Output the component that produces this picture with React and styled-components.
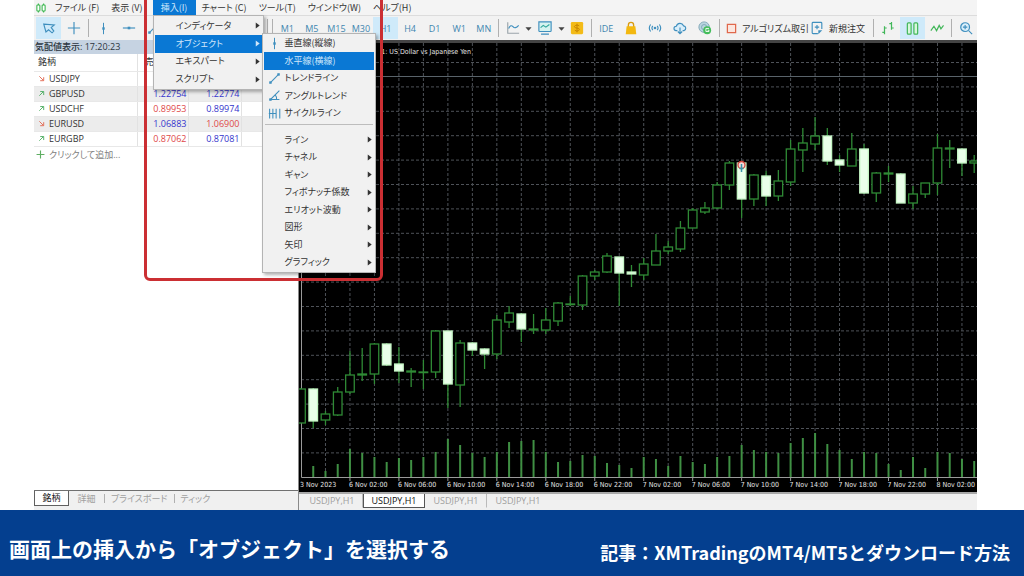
import React, { useState } from 'react'
import styled, { createGlobalStyle } from 'styled-components'

const GlobalStyle = createGlobalStyle`
  * { box-sizing: border-box; }
  body {
    margin: 0;
    background: #fff;
    font-family: 'Open Sans', 'Noto Sans CJK JP', sans-serif;
    font-feature-settings: 'palt';
  }
  button {
    font: inherit;
    font-feature-settings: inherit;
    color: inherit;
    border: 0;
    padding: 0;
    background: none;
    white-space: nowrap;
  }
`

const Page = styled.div`
  min-height: 100vh;
  display: flex;
  flex-direction: column;
`

const Terminal = styled.main`
  position: relative;
  margin: 0 47px 0 34px;
  background: #f0f0f0;
  color: #333;
  font-size: 9px;
`

/* ---------- menu bar ---------- */

const MenuBar = styled.nav`
  display: flex;
  align-items: stretch;
  height: 16px;
  background: #f4f4f4;
  border-bottom: 1px solid #dcdcdc;
  font-family: 'Noto Sans CJK JP', sans-serif;
`

const AppIcon = styled.span`
  display: flex;
  align-items: center;
  width: 15px;
  padding-left: 1px;
`

const MenuSlot = styled.div`
  position: relative;
  display: flex;
  padding-left: 4px;
`

const MenuTop = styled.button`
  min-width: 43px;
  padding: 0 6px;
  line-height: 14px;
  background: ${p => (p.$open ? '#0a78d4' : 'transparent')};
  color: ${p => (p.$open ? '#cfe6fa' : '#333')};
`

const MenuList = styled.ul`
  position: absolute;
  z-index: 10;
  top: ${p => (p.$sub ? '-2px' : '15px')};
  left: ${p => (p.$sub ? '107px' : '4px')};
  width: ${p => (p.$sub ? '114px' : '111px')};
  height: ${p => (p.$sub ? '240px' : '75px')};
  margin: 0;
  padding: 1px;
  display: flex;
  flex-direction: column;
  list-style: none;
  background: #f1f1f1;
  border: 1px solid #b4b4b4;
  box-shadow: 2px 2px 3px rgba(0, 0, 0, 0.3);
`

const MenuRow = styled.li`
  position: relative;
  display: flex;
  flex: 1;
`

const MenuItem = styled.button`
  display: grid;
  grid-template-columns: 21px 1fr 8px;
  align-items: center;
  flex: 1;
  min-height: 0;
  text-align: left;
  line-height: 12px;
  background: ${p => (p.$active ? '#0a78d4' : 'transparent')};
  color: ${p => (p.$active ? '#cfe6fa' : '#333')};
  svg { justify-self: center; }
`

const MenuRule = styled.li`
  height: 7px;
  margin: 2px 1px 0;
  border-top: 1px solid #bdbdbd;
  flex: none;
`

/* ---------- toolbar ---------- */

const Toolbar = styled.div`
  display: flex;
  align-items: center;
  height: 24px;
  padding-left: 2px;
  overflow: hidden;
  background: #f2f2f2;
  color: #3f86b0;
`

const ToolGroup = styled.div`
  display: flex;
  align-items: center;
  flex: none;
  width: ${p => p.$width}px;
`

const Tool = styled.button`
  display: flex;
  align-items: center;
  justify-content: center;
  flex: ${p => (p.$narrow ? '0 0 9px' : '1')};
  height: 22px;
  background: ${p => (p.$on ? '#cfeafa' : 'transparent')};
`

const LabelTool = styled.button`
  display: flex;
  align-items: center;
  gap: 5px;
  height: 22px;
  padding-left: 4px;
  color: #333;
`

const Divider = styled.span`
  flex: none;
  width: 1px;
  height: 18px;
  margin: 0 2px;
  background: #b0b0b0;
`

/* ---------- market watch ---------- */

const Workspace = styled.div`
  display: grid;
  grid-template-columns: 264px 1fr;
`

const WatchPanel = styled.section`
  display: flex;
  flex-direction: column;
  background: #fff;
`

const WatchTitle = styled.h2`
  margin: 0;
  height: 14px;
  padding-left: 1px;
  font-size: 9px;
  line-height: 13px;
  font-weight: 500;
  color: #2c3540;
  background: #c6d3e2;
`

const WatchTable = styled.table`
  width: 100%;
  border-collapse: collapse;
  table-layout: fixed;
  th, td {
    height: 15px;
    padding: 0 1px 0 4px;
    line-height: 14px;
    font-weight: 400;
    border-right: 1px solid #e2e2e2;
    border-bottom: 1px solid #e8e8e8;
  }
  th {
    height: 17px;
    text-align: left;
  }
  th + th { padding-left: 7px; }
  th:nth-child(1) { width: 103px; }
  th:nth-child(2) { width: 51px; }
  th:nth-child(3) { width: 53px; }
  tr:nth-child(even) td { background: #ececec; }
`

const Price = styled.td`
  text-align: right;
  color: ${p => (p.$down ? '#e04848' : '#3434cc')};
`

const SymbolCell = styled.span`
  display: flex;
  align-items: center;
  gap: 4px;
`

const AddSymbol = styled.button`
  display: flex;
  align-items: center;
  gap: 4px;
  height: 16px;
  padding-left: 2px;
  color: #808080;
`

const WatchTabs = styled.div`
  display: flex;
  align-items: center;
  height: 20px;
  margin-top: auto;
  padding: 0 0 5px;
  border-top: 1px solid #707070;
  background: #f0f0f0;
`

const WatchTab = styled.button`
  height: 15px;
  min-width: 35px;
  padding: 0 6px;
  line-height: 13px;
  color: ${p => (p.$on ? '#222' : '#a0a0a0')};
  background: ${p => (p.$on ? '#fff' : 'transparent')};
  border: ${p => (p.$on ? '1px solid #606060' : '0')};
  border-top: 0;
  & + & + & {
    height: 9px;
    line-height: 9px;
    border-left: 1px solid #b0b0b0;
  }
`

/* ---------- chart ---------- */

const ChartPanel = styled.section`
  display: flex;
  flex-direction: column;
  min-width: 0;
  border-left: 1px solid #8a8a8a;
`

const ChartFrame = styled.div`
  background: #000;
  border-top: 3px solid #444;
  border-bottom: 2px solid #a8a8a8;
  svg {
    display: block;
    width: 100%;
    height: auto;
  }
`

const ChartTabs = styled.div`
  display: flex;
  align-items: flex-start;
  height: 16px;
  padding-left: 2px;
`

const ChartTab = styled.button`
  width: 62px;
  height: 14px;
  line-height: 13px;
  color: ${p => (p.$on ? '#111' : '#a0a0a0')};
  background: ${p => (p.$on ? '#fff' : 'transparent')};
  border: 1px solid ${p => (p.$on ? '#555' : 'transparent')};
  border-right-color: ${p => (p.$on ? '#555' : '#bbb')};
  border-top: 0;
  &:last-child { border-right-color: transparent; }
`

const RedFrame = styled.div`
  position: absolute;
  z-index: 20;
  top: -8px;
  left: 110px;
  width: 239px;
  height: 289px;
  border: 3px solid #cb2f33;
  border-radius: 6px;
  pointer-events: none;
`

/* ---------- caption ---------- */

const Caption = styled.footer`
  flex: 1;
  display: flex;
  align-items: center;
  justify-content: space-between;
  min-height: 66px;
  padding: 10px 14px 0 9px;
  background: #043f8f;
  color: #fff;
  font-family: 'Noto Sans CJK JP', sans-serif;
  font-feature-settings: normal;
  font-weight: 700;
`

const Headline = styled.p`
  margin: 0;
  font-size: 21px;
  line-height: 32px;
`

const Source = styled.p`
  margin: 8px 0 0;
  font-size: 18px;
  line-height: 24px;
`

const insertMenu = ['インディケータ', 'オブジェクト', 'エキスパート', 'スクリプト']

const objectTools = [
  { label: '垂直線(縦線)', icon: 'vline' },
  { label: '水平線(横線)', icon: 'none', active: true },
  { label: 'トレンドライン', icon: 'trend' },
  { label: 'アングルトレンド', icon: 'angle' },
  { label: 'サイクルライン', icon: 'cycle' },
]

const objectGroups = ['ライン', 'チャネル', 'ギャン', 'フィボナッチ係数', 'エリオット波動', '図形', '矢印', 'グラフィック']

const timeframes = ['M1', 'M5', 'M15', 'M30', 'H1', 'H4', 'D1', 'W1', 'MN']

const quotes = [
  { symbol: 'USDJPY', up: false },
  { symbol: 'GBPUSD', up: true, bid: '1.22754', ask: '1.22774' },
  { symbol: 'USDCHF', up: true, bid: '0.89953', ask: '0.89974', bidDown: true },
  { symbol: 'EURUSD', up: false, bid: '1.06883', ask: '1.06900', askDown: true },
  { symbol: 'EURGBP', up: true, bid: '0.87062', ask: '0.87081', bidDown: true },
]

// high, body top, body bottom, low, falling
const candles = [
  [388, 389, 423, 423, 0], [388, 389, 421, 428, 1], [411, 414, 420, 425, 0], [387, 392, 415, 416, 0],
  [351, 375, 392, 394, 0], [348, 374, 375, 381, 0], [343, 344, 374, 384, 0], [343, 344, 365, 366, 1],
  [347, 364, 371, 383, 1], [368, 371, 372, 387, 0], [360, 372, 372, 389, 0], [330, 331, 372, 378, 0],
  [331, 331, 384, 408, 1], [340, 343, 385, 407, 0], [342, 343, 350, 356, 1], [348, 349, 354, 369, 1],
  [315, 320, 354, 359, 0], [306, 313, 322, 328, 0], [313, 314, 329, 342, 1], [314, 329, 330, 334, 0],
  [308, 320, 330, 334, 0], [302, 303, 321, 326, 0], [296, 304, 304, 306, 0], [275, 276, 305, 310, 0],
  [270, 272, 276, 280, 0], [253, 256, 272, 273, 0], [257, 257, 273, 306, 1], [265, 272, 274, 287, 1],
  [258, 264, 275, 280, 0], [234, 251, 265, 265, 0], [241, 247, 251, 254, 0], [221, 228, 249, 252, 0],
  [208, 210, 228, 228, 0], [202, 208, 212, 214, 0], [182, 185, 208, 209, 0], [161, 163, 185, 190, 0],
  [162, 163, 199, 218, 1], [174, 175, 199, 206, 0], [171, 176, 196, 206, 1], [170, 181, 196, 201, 0],
  [140, 149, 182, 186, 0], [128, 143, 150, 172, 0], [117, 136, 144, 150, 0], [128, 136, 161, 165, 1],
  [155, 160, 165, 172, 1], [133, 149, 166, 166, 0], [144, 149, 193, 194, 1], [172, 173, 193, 202, 0],
  [166, 173, 174, 182, 0], [173, 174, 203, 203, 1], [186, 194, 203, 209, 0], [183, 183, 194, 198, 0],
  [134, 148, 183, 195, 0], [140, 148, 149, 168, 0], [148, 149, 163, 176, 1], [155, 161, 163, 173, 0],
]

const volumes = [
  0, 11, 6, 13, 28, 24, 20, 15, 19, 17, 20, 25, 38, 32, 24, 20, 25, 35, 36, 37, 25, 15, 16, 22, 21, 14, 12, 9,
  20, 18, 11, 21, 15, 13, 20, 21, 32, 27, 25, 24, 34, 39, 44, 33, 27, 18, 25, 24, 13, 7, 20, 9, 25, 24, 18, 16,
]

const times = [
  '6 Nov 02:00', '6 Nov 06:00', '6 Nov 10:00', '6 Nov 14:00', '6 Nov 18:00', '6 Nov 22:00', '7 Nov 02:00',
  '7 Nov 06:00', '7 Nov 10:00', '7 Nov 14:00', '7 Nov 18:00', '7 Nov 22:00', '8 Nov 02:00',
]

const STEP = 12.24
const barX = i => 301 + STEP * i

function Icon({ name }) {
  const line = { fill: 'none', stroke: '#3f8fbe', strokeWidth: 1.3 }
  const shapes = {
    none: null,
    logo: (
      <g fill="#fff" stroke="#36b54a" strokeWidth="1.4">
        <path d="M4.500 2v12M11.500 2v12" />
        <rect x="2.500" y="4" width="4" height="8" rx="1" />
        <rect x="9.500" y="4" width="4" height="8" rx="1" />
      </g>
    ),
    cursor: <path {...line} d="M2 3.500l12 1-3.500 3 3 4-2 2-4-3.500-3 2.500z" />,
    cross: <path {...line} d="M8 1v14M1 8h14M6.500 8h3M8 6.500v3" />,
    vline: <g><path {...line} d="M8 1v14" /><rect x="6.500" y="6.500" width="3" height="3" fill="#3f8fbe" /></g>,
    hline: <g><path {...line} d="M1 8h14" /><rect x="6.500" y="6.500" width="3" height="3" fill="#3f8fbe" /></g>,
    trend: <g><path {...line} d="M3 13L13 3" /><rect x="1.500" y="11.500" width="3" height="3" fill="#3f8fbe" /><rect x="11.500" y="1.500" width="3" height="3" fill="#3f8fbe" /></g>,
    angle: <g><path {...line} d="M14 2L3 13h11M9 7.500q2 2 1.500 5.500" /><rect x="1.500" y="11.500" width="3" height="3" fill="#3f8fbe" /></g>,
    cycle: <path {...line} d="M2 2v12M6 2v12M10 2v12M14.500 2v12M1 8h9" />,
    linechart: <g><path {...line} stroke="#9aa4aa" d="M2 1.500v12.500h13" /><path {...line} d="M3 8.500q2.500-5 5-2t6.500-1.500" /></g>,
    caret: <path d="M1 5h14l-7 8z" fill="#444" />,
    screen: <g><path {...line} fill="#d6f3f0" d="M1 1h14v10q0 1-1 1H2q-1 0-1-1zM3.500 15h9" /><path {...line} stroke="#2fa79b" d="M3 7.500l3-2.500 3 2 4-3" /></g>,
    dollar: <g><rect x="1" y="1" width="14" height="14" rx="1.500" fill="#f3bb18" /><path d="M10.500 5.500q-2.500-1.500-4.500-.3t0 2.500l4 .8q1.500 1.800-.5 2.700t-4-.6M8 3v10" fill="none" stroke="#c68300" strokeWidth="1.100" /></g>,
    bag: <g><path d="M5 7V4.500a3 3 0 016 0V7" fill="none" stroke="#d99b10" strokeWidth="1.500" /><path d="M3 6h10l1 9H2z" fill="#f3b80f" /></g>,
    signal: <g><circle cx="8" cy="8" r="1.500" fill="#3f8fbe" /><path {...line} d="M5.500 5.500q-2 2.500 0 5M3 4q-3 4 0 8M10.500 5.500q2 2.500 0 5M13 4q3 4 0 8" /></g>,
    cloud: <path {...line} fill="#d9eefa" d="M5 11H3.500a2.500 2.500 0 01.3-5A4.300 4.300 0 0112 5.500a2.800 2.800 0 01.5 5.500H11M8 7.500v6.500M5.500 12l2.500 2.500L10.500 12" />,
    globe: <g><circle cx="7" cy="7" r="6" fill="#b9d5df" stroke="#7ba3b5" /><circle cx="7" cy="7" r="3" fill="none" stroke="#7ba3b5" /><circle cx="10.500" cy="10.500" r="4.500" fill="#43bd5b" /><path d="M12.500 8.500h-3.500v3.500h3.500v-1.500h-1.500" fill="none" stroke="#fff" /></g>,
    stop: <rect x="2" y="2" width="12" height="12" fill="#fbe6df" stroke="#e0684c" strokeWidth="1.800" />,
    order: <g><path {...line} d="M9 14.500H3.500q-1 0-1-1v-11q0-1 1-1h9q1 0 1 1V9M8 4.500v5M5.500 7h5" /><path d="M9.500 15v-4.500H14z" fill="#3f8fbe" /></g>,
    bars: <path fill="none" stroke="#43b75a" strokeWidth="1.400" d="M4 6v9M1.500 13H4M4 8h2.500M12 1v9M9.500 3H12M12 8h2.500" />,
    candles: <g fill="#d8f7dc" stroke="#43b75a" strokeWidth="1.300"><rect x="2.500" y="2" width="4" height="12" rx="1" /><rect x="9.500" y="2" width="4" height="12" rx="1" /></g>,
    zigzag: <path fill="none" stroke="#43b75a" strokeWidth="1.400" d="M1 11l3.500-5 3 5 3-6 2 4 3-4" />,
    zoom: <g><circle cx="7" cy="7" r="5" fill="#d9eefa" stroke="#3f8fbe" strokeWidth="1.400" /><path {...line} d="M11 11l4 4M4.500 7h5M7 4.500v5" /></g>,
    up: <path fill="none" stroke="#43a95a" strokeWidth="2" d="M3 13L12 4M5 3.500h8v8" />,
    down: <path fill="none" stroke="#e06048" strokeWidth="2" d="M3 3l9 9M13 5v8H5" />,
    plus: <path stroke="#5fae63" strokeWidth="2" d="M8 1v14M1 8h14" />,
    arrow: <path d="M4 1l9 7-9 7z" fill="currentColor" />,
  }
  const sizes = { caret: 7, arrow: 7, up: 7, down: 7, plus: 9, logo: 12, stop: 11, vline: 13, none: 13, trend: 13, angle: 13, cycle: 13, candles: 15 }
  const size = sizes[name] || 14
  return (
    <svg width={size} height={size} viewBox="0 0 16 16" aria-hidden="true">
      {shapes[name]}
    </svg>
  )
}

function ObjectMenu() {
  return (
    <MenuList $sub>
      {objectTools.map(t => (
        <MenuRow key={t.label}>
          <MenuItem $active={t.active}>
            <Icon name={t.icon} />
            <span>{t.label}</span>
          </MenuItem>
        </MenuRow>
      ))}
      <MenuRule />
      {objectGroups.map(label => (
        <MenuRow key={label}>
          <MenuItem>
            <span />
            <span>{label}</span>
            <Icon name="arrow" />
          </MenuItem>
        </MenuRow>
      ))}
    </MenuList>
  )
}

function InsertMenu() {
  return (
    <MenuList>
      {insertMenu.map(label => (
        <MenuRow key={label}>
          <MenuItem $active={label === 'オブジェクト'}>
            <span />
            <span>{label}</span>
            <Icon name="arrow" />
          </MenuItem>
          {label === 'オブジェクト' && <ObjectMenu />}
        </MenuRow>
      ))}
    </MenuList>
  )
}

function Tools({ names, on }) {
  return names.map(n => (
    <Tool key={n} aria-label={n} $on={n === on}>
      <Icon name={n} />
    </Tool>
  ))
}

function Chart() {
  const columns = Array.from({ length: 27 }, (_, i) => barX(i * 2 + 2))
  const rows = Array.from({ length: 17 }, (_, i) => 62.5 + i * 24.4)

  return (
    <svg viewBox="299 43 678 449" role="img" aria-label="USDJPY H1">
      <g stroke="#4e5258" strokeWidth="1" strokeDasharray="3 2">
        {columns.map(x => <line key={x} x1={x} x2={x} y1="43" y2="477" />)}
        {rows.map(y => <line key={y} x1="301" x2="977" y1={y} y2={y} />)}
      </g>
      <path d="M301 76.500h676" stroke="#59636a" />
      <path d="M301.500 43v434.500H977" fill="none" stroke="#9a9a9a" />
      <g stroke="#3f8f43" strokeWidth="2">
        {volumes.map((v, i) => <line key={i} x1={barX(i)} x2={barX(i)} y1={477 - v} y2="477" />)}
      </g>
      <g stroke="#2f8a35" strokeWidth="1.3">
        {candles.map(([high, top, bottom, low, falling], i) => {
          const x = barX(i)
          return (
            <g key={i}>
              <line x1={x} x2={x} y1={high} y2={low} />
              <rect
                x={x - 4.3}
                y={top}
                width="8.6"
                height={Math.max(bottom - top, 0.6)}
                fill={falling ? '#eaffea' : '#000'}
                stroke={falling ? '#c4f5c4' : '#2f8a35'}
              />
            </g>
          )
        })}
      </g>
      <circle cx="741.500" cy="165" r="3.500" fill="#f6dada" stroke="#d4463c" strokeWidth="1.300" />
      <path d="M741.500 164v8M739.500 168.500h4" stroke="#3a95a8" strokeWidth="1.500" />
      <g fill="#e4e4e4" fontFamily="'DejaVu Sans Condensed', 'DejaVu Sans', sans-serif" fontSize="7">
        <text x="471" y="54" textAnchor="end">1: US Dollar vs Japanese Yen</text>
        <text x="300" y="487">3 Nov 2023</text>
        {times.map((t, i) => <text key={t} x={barX(i * 4 + 4) - 1} y="487">{t}</text>)}
      </g>
      <g stroke="#9a9a9a">
        {times.map((t, i) => <line key={t} x1={barX(i * 4 + 4)} x2={barX(i * 4 + 4)} y1="477" y2="481" />)}
      </g>
    </svg>
  )
}

export default function App() {
  const [period, setPeriod] = useState('H1')
  const [tab, setTab] = useState(1)
  const [watchTab, setWatchTab] = useState('銘柄')

  return (
    <>
      <GlobalStyle />
      <Page>
        <Terminal>
          <MenuBar>
            <AppIcon><Icon name="logo" /></AppIcon>
            <MenuTop>ファイル (F)</MenuTop>
            <MenuTop>表示 (V)</MenuTop>
            <MenuSlot>
              <MenuTop $open>挿入(I)</MenuTop>
              <InsertMenu />
            </MenuSlot>
            <MenuTop>チャート (C)</MenuTop>
            <MenuTop>ツール(T)</MenuTop>
            <MenuTop>ウインドウ(W)</MenuTop>
            <MenuTop>ヘルプ(H)</MenuTop>
          </MenuBar>

          <Toolbar>
            <ToolGroup $width={50}><Tools names={['cursor', 'cross']} on="cursor" /></ToolGroup>
            <Divider />
            <ToolGroup $width={174}>
              <ToolGroup $width={125}><Tools names={['vline', 'hline', 'trend', 'angle', 'cycle']} /></ToolGroup>
            </ToolGroup>
            <Divider />
            <Divider />
            <ToolGroup $width={221}>
              {timeframes.map(t => (
                <Tool key={t} $on={t === period} onClick={() => setPeriod(t)}>{t}</Tool>
              ))}
            </ToolGroup>
            <Divider />
            <ToolGroup $width={88}>
              <Tool aria-label="linechart"><Icon name="linechart" /></Tool>
              <Tool $narrow aria-label="linechart options"><Icon name="caret" /></Tool>
              <Tool aria-label="screen"><Icon name="screen" /></Tool>
              <Tool $narrow aria-label="screen options"><Icon name="caret" /></Tool>
              <Tool aria-label="dollar"><Icon name="dollar" /></Tool>
            </ToolGroup>
            <Divider />
            <ToolGroup $width={123}>
              <Tool>IDE</Tool>
              <Tools names={['bag', 'signal', 'cloud', 'globe']} />
            </ToolGroup>
            <Divider />
            <ToolGroup $width={149}>
              <ToolGroup $width={84}>
                <LabelTool><Icon name="stop" />アルゴリズム取引</LabelTool>
              </ToolGroup>
              <LabelTool><Icon name="order" />新規注文</LabelTool>
            </ToolGroup>
            <Divider />
            <ToolGroup $width={73}><Tools names={['bars', 'candles', 'zigzag']} on="candles" /></ToolGroup>
            <Divider />
            <ToolGroup $width={24}><Tools names={['zoom']} /></ToolGroup>
          </Toolbar>

          <Workspace>
            <WatchPanel>
              <WatchTitle>気配値表示: 17:20:23</WatchTitle>
              <WatchTable>
                <thead>
                  <tr><th>銘柄</th><th>売</th><th /><th /></tr>
                </thead>
                <tbody>
                  {quotes.map(q => (
                    <tr key={q.symbol}>
                      <td><SymbolCell><Icon name={q.up ? 'up' : 'down'} />{q.symbol}</SymbolCell></td>
                      <Price $down={q.bidDown}>{q.bid}</Price>
                      <Price $down={q.askDown}>{q.ask}</Price>
                      <td />
                    </tr>
                  ))}
                </tbody>
              </WatchTable>
              <AddSymbol><Icon name="plus" />クリックして追加...</AddSymbol>
              <WatchTabs>
                {['銘柄', '詳細', 'プライスボード', 'ティック'].map(t => (
                  <WatchTab key={t} $on={t === watchTab} onClick={() => setWatchTab(t)}>{t}</WatchTab>
                ))}
              </WatchTabs>
            </WatchPanel>

            <ChartPanel>
              <ChartFrame><Chart /></ChartFrame>
              <ChartTabs>
                {[0, 1, 2, 3].map(i => (
                  <ChartTab key={i} $on={i === tab} onClick={() => setTab(i)}>USDJPY,H1</ChartTab>
                ))}
              </ChartTabs>
            </ChartPanel>
          </Workspace>
          <RedFrame />
        </Terminal>

        <Caption>
          <Headline>画面上の挿入から「オブジェクト」を選択する</Headline>
          <Source>記事：XMTradingのMT4/MT5とダウンロード方法</Source>
        </Caption>
      </Page>
    </>
  )
}
